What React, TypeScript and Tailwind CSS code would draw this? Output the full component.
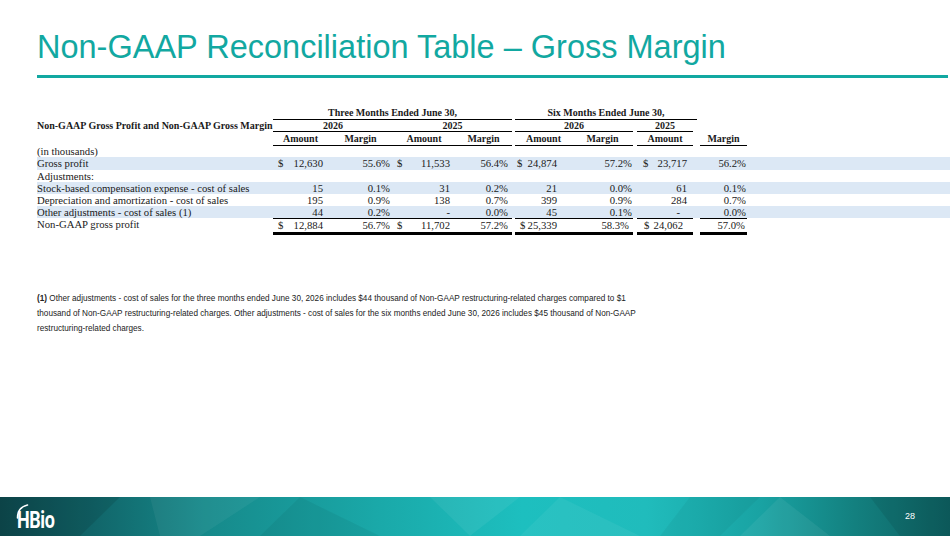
type Cell = { amount: string; margin: string };

type Row = {
    label: string;
    band?: boolean;
    total?: boolean;
    dollar?: boolean;
    cells?: Cell[];
};

const cols = "grid grid-cols-[236px_55px_65px_62px_57px_60px_64px_61px_51px]";

// per column group: $ left pad, number right pad, margin right pad, dash right pad
const groups = [
    { pl: "pl-[5px]", pr: "pr-[5px]", mr: "pr-[3px]", dash: "pr-[5px]" },
    { pl: "pl-[4px]", pr: "pr-[5px]", mr: "pr-[4px]", dash: "pr-[5px]" },
    { pl: "pl-[5px]", pr: "pr-[15px]", mr: "pr-[4px]", dash: "pr-[15px]" },
    { pl: "pl-[7px]", pr: "pr-[10px]", mr: "pr-[2px]", dash: "pr-[17px]" },
];

// underline spans for amount / margin columns of the last row
const totalLines = [
    "", "", "", "",
    "ml-[3px]", "mr-[3px]",
    "ml-[1px] mr-[4px]", "ml-[3px] mr-[1px]",
];

const rows: Row[] = [
    { label: "(in thousands)" },
    {
        label: "Gross profit",
        band: true,
        dollar: true,
        cells: [
            { amount: "12,630", margin: "55.6%" },
            { amount: "11,533", margin: "56.4%" },
            { amount: "24,874", margin: "57.2%" },
            { amount: "23,717", margin: "56.2%" },
        ],
    },
    { label: "Adjustments:" },
    {
        label: "Stock-based compensation expense - cost of sales",
        band: true,
        cells: [
            { amount: "15", margin: "0.1%" },
            { amount: "31", margin: "0.2%" },
            { amount: "21", margin: "0.0%" },
            { amount: "61", margin: "0.1%" },
        ],
    },
    {
        label: "Depreciation and amortization - cost of sales",
        cells: [
            { amount: "195", margin: "0.9%" },
            { amount: "138", margin: "0.7%" },
            { amount: "399", margin: "0.9%" },
            { amount: "284", margin: "0.7%" },
        ],
    },
    {
        label: "Other adjustments - cost of sales (1)",
        band: true,
        cells: [
            { amount: "44", margin: "0.2%" },
            { amount: "-", margin: "0.0%" },
            { amount: "45", margin: "0.1%" },
            { amount: "-", margin: "0.0%" },
        ],
    },
    {
        label: "Non-GAAP gross profit",
        total: true,
        dollar: true,
        cells: [
            { amount: "12,884", margin: "56.7%" },
            { amount: "11,702", margin: "57.2%" },
            { amount: "25,339", margin: "58.3%" },
            { amount: "24,062", margin: "57.0%" },
        ],
    },
];

function TableRow({ row }: { row: Row }) {
    const line = "border-t border-b-[3px] border-t-black border-b-black border-b-double";
    return (
        <div className={`${cols} leading-[12.2px] ${row.band ? "bg-[#dce8f5]" : ""} ${row.total ? "h-[15px]" : "h-[12.2px]"}`}>
            <div className="whitespace-nowrap">{row.label}</div>
            {row.cells?.map((c, i) => {
                const g = groups[i];
                return [
                    <div key={`a${i}`} className={row.total ? `${line} ${totalLines[i * 2]}` : ""}>
                        <div className={`flex justify-between ${g.pl} ${c.amount === "-" ? g.dash : g.pr}`}>
                            <span>{row.dollar ? "$" : ""}</span>
                            <span>{c.amount}</span>
                        </div>
                    </div>,
                    <div key={`m${i}`} className={row.total ? `${line} ${totalLines[i * 2 + 1]}` : ""}>
                        <div className={`text-right ${g.mr}`}>{c.margin}</div>
                    </div>,
                ];
            })}
        </div>
    );
}

function Footer() {
    return (
        <div className="relative h-[39px] overflow-hidden bg-[linear-gradient(90deg,#0e4b50_0%,#11666a_10%,#168a8b_22%,#1aa9a9_40%,#1dbfbf_55%,#20bcbc_68%,#19a3a3_80%,#13807f_90%,#0e6061_100%)]">

            {/* facets */}
            <svg className="absolute inset-0" width="950" height="39" viewBox="0 0 950 39">
                <polygon points="150,0 260,0 200,39 160,39" fill="#ffffff" opacity="0.05" />
                <polygon points="300,0 380,39 260,39" fill="#000000" opacity="0.05" />
                <polygon points="430,0 520,0 470,39" fill="#ffffff" opacity="0.06" />
                <polygon points="560,0 640,39 520,39" fill="#ffffff" opacity="0.05" />
                <polygon points="690,0 760,0 720,39 660,39" fill="#000000" opacity="0.04" />
                <polygon points="780,0 830,39 740,39" fill="#ffffff" opacity="0.06" />
                <polygon points="870,0 950,0 950,39 900,39" fill="#000000" opacity="0.08" />
                <polygon points="0,0 120,0 80,39 0,39" fill="#000000" opacity="0.1" />
            </svg>

            <div className="relative flex h-full items-center justify-between pl-[16px] pr-[35px]">

                {/* logo */}
                <div className="relative mt-[2px] h-[30px] w-[50px]">
                    <svg className="absolute left-0 top-0" width="20" height="16" viewBox="0 0 20 16">
                        <path d="M1.5 15 C1.5 8 5 3.5 11.5 2" fill="none" stroke="#ffffff" strokeWidth="1.6" strokeLinecap="round" />
                    </svg>
                    <span className="absolute left-[1px] top-[6px] origin-left scale-x-[0.78] font-['Roboto',sans-serif] text-[23px] font-bold leading-[23px] tracking-[-0.5px] text-white">
                        HBio
                    </span>
                </div>

                <span className="font-['Liberation_Sans',Arial,sans-serif] text-[9px] text-white">28</span>

            </div>

        </div>
    );
}

export default function App() {
    return (
        <div className="flex h-[536px] w-[950px] flex-col overflow-hidden bg-white font-['Liberation_Sans',Arial,sans-serif]">

            {/* title */}
            <div className="px-[37px] pt-[29px]">
                <h1 className="text-[32.5px] leading-[37px] text-[#12a8a1]">
                    Non-GAAP Reconciliation Table – Gross Margin
                </h1>
            </div>
            <div className="ml-[37px] mr-[2px] mt-[9px] h-[3px] bg-[#12a8a1]" />

            {/* table */}
            <div className="ml-[37px] mt-[30px] font-['Liberation_Serif','Times_New_Roman',serif] text-[10.7px] text-[#1a1a1a]">

                <div className={`${cols} h-[11.5px] text-[10px] font-bold leading-[10.5px]`}>
                    <div />
                    <div className="col-span-4 border-b border-black text-center">Three Months Ended June 30,</div>
                    <div className="col-span-3 ml-[3px] border-b border-black text-center">Six Months Ended June 30,</div>
                    <div />
                </div>

                <div className={`${cols} h-[12.2px] text-[10px] font-bold leading-[11.2px]`}>
                    <div className="whitespace-nowrap">Non-GAAP Gross Profit and Non-GAAP Gross Margin</div>
                    <div className="col-span-2 border-b border-black text-center">2026</div>
                    <div className="col-span-2 border-b border-black text-center">2025</div>
                    <div className="col-span-2 mx-[3px] border-b border-black text-center">2026</div>
                    <div className="ml-[1px] mr-[4px] border-b border-black text-center">2025</div>
                    <div />
                </div>

                <div className={`${cols} h-[13.6px] text-[10px] font-bold leading-[13px]`}>
                    <div />
                    <div className="border-b border-black text-center">Amount</div>
                    <div className="border-b border-black text-center">Margin</div>
                    <div className="border-b border-black text-center">Amount</div>
                    <div className="border-b border-black text-center">Margin</div>
                    <div className="ml-[3px] border-b border-black text-center">Amount</div>
                    <div className="mr-[3px] border-b border-black text-center">Margin</div>
                    <div className="ml-[1px] mr-[4px] border-b border-black text-center">Amount</div>
                    <div className="ml-[3px] mr-[1px] border-b border-black text-center">Margin</div>
                </div>

                {rows.map((row, i) => (
                    <TableRow key={i} row={row} />
                ))}

            </div>

            {/* footnote */}
            <p className="ml-[37px] mt-[58px] text-[8.2px] leading-[15px] text-[#222]">
                <span className="font-bold">(1)</span> Other adjustments - cost of sales for the three months ended June 30, 2026 includes $44 thousand of Non-GAAP restructuring-related charges compared to $1
                <br />
                thousand of Non-GAAP restructuring-related charges. Other adjustments - cost of sales for the six months ended June 30, 2026 includes $45 thousand of Non-GAAP
                <br />
                restructuring-related charges.
            </p>

            <div className="flex-1" />

            <Footer />

        </div>
    );
}
